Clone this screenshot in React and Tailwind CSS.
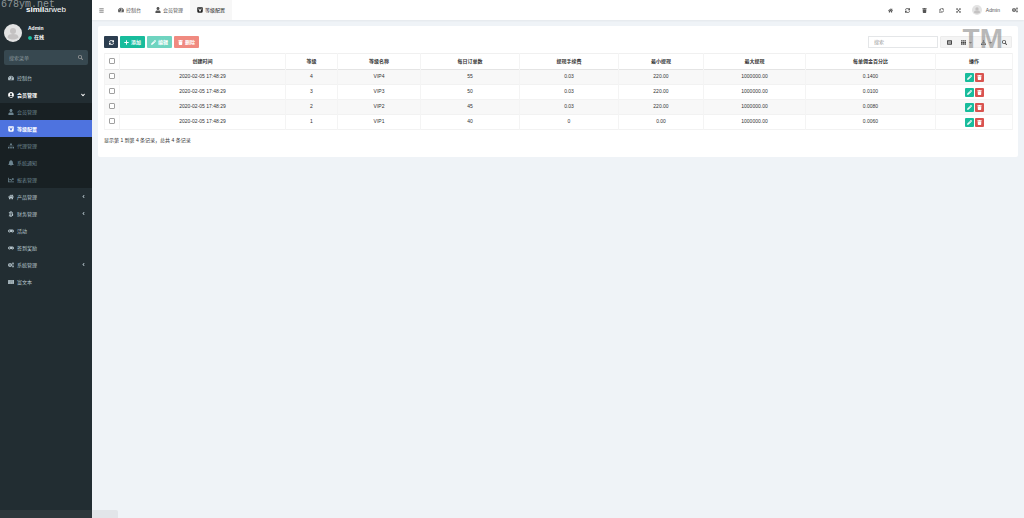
import {
  FaBars, FaTachometerAlt, FaUser, FaUserCircle, FaSitemap, FaBell, FaChartLine,
  FaHome, FaBtc, FaGamepad, FaCogs, FaNewspaper, FaAngleDown, FaAngleLeft, FaSearch,
  FaTrash, FaRegCopy, FaExpandArrowsAlt, FaPlus, FaPencilAlt, FaListAlt, FaTh,
  FaCaretDown, FaDownload, FaCircle, FaSync,
} from 'react-icons/fa'

function LevelIcon({ size }) {
  return (
    <svg viewBox="0 0 24 24" width={size} height={size} fill="currentColor" fillRule="evenodd" aria-hidden="true">
      <path d="M3 1h18a2 2 0 0 1 2 2v14a6 6 0 0 1-6 6H7a6 6 0 0 1-6-6V3a2 2 0 0 1 2-2zM5 6l5 12h4l5-12h-4l-3 7-3-7z" />
    </svg>
  )
}

const MENU = [
  { label: '控制台', icon: FaTachometerAlt },
  {
    label: '会员管理',
    icon: FaUserCircle,
    children: [
      { label: '会员管理', icon: FaUser },
      { label: '等级配置', icon: LevelIcon },
      { label: '代理管理', icon: FaSitemap },
      { label: '系统通知', icon: FaBell },
      { label: '报表管理', icon: FaChartLine },
    ],
  },
  { label: '产品管理', icon: FaHome, arrow: true },
  { label: '财务管理', icon: FaBtc, arrow: true },
  { label: '活动', icon: FaGamepad },
  { label: '签到奖励', icon: FaGamepad },
  { label: '系统管理', icon: FaCogs, arrow: true },
  { label: '富文本', icon: FaNewspaper },
]

const TABS = [
  { label: '控制台', icon: FaTachometerAlt },
  { label: '会员管理', icon: FaUser },
  { label: '等级配置', icon: LevelIcon, active: true },
]

const TOOLS = [
  { label: '主页', icon: FaHome },
  { label: '刷新', icon: FaSync },
  { label: '清除缓存', icon: FaTrash },
  { label: '语言', icon: FaRegCopy },
  { label: '全屏', icon: FaExpandArrowsAlt },
]

const COLUMNS = [
  { label: '创建时间', width: 'w-[166px]' },
  { label: '等级', width: 'w-[52px]' },
  { label: '等级名称', width: 'w-[83px]' },
  { label: '每日订单数', width: 'w-[99px]' },
  { label: '提现手续费', width: 'w-[99px]' },
  { label: '最小提现', width: 'w-[85px]' },
  { label: '最大提现', width: 'w-[102px]' },
  { label: '每单佣金百分比', width: 'w-[130px]' },
  { label: '操作', width: 'w-[77px]' },
]

const ROWS = [
  ['2020-02-05 17:48:29', '4', 'VIP4', '55', '0.03', '220.00', '1000000.00', '0.1400'],
  ['2020-02-05 17:48:29', '3', 'VIP3', '50', '0.03', '220.00', '1000000.00', '0.0100'],
  ['2020-02-05 17:48:29', '2', 'VIP2', '45', '0.03', '220.00', '1000000.00', '0.0080'],
  ['2020-02-05 17:48:29', '1', 'VIP1', '40', '0', '0.00', '1000000.00', '0.0060'],
]

const CELL = 'border-x border-[#f4f4f4] pb-[2px]'

function Avatar({ className }) {
  return (
    <svg viewBox="0 0 36 36" className={className} aria-hidden="true">
      <circle cx="18" cy="18" r="18" fill="#e3e3e3" />
      <circle cx="18" cy="14" r="6" fill="#c4c2c2" />
      <path d="M7 27c0-5 4-7 11-7s11 2 11 7c-3 3-7 4-11 4s-8-1-11-4z" fill="#c4c2c2" />
    </svg>
  )
}

function MenuLink({ item, className, open }) {
  const Icon = item.icon
  return (
    <a href="#" className={`flex h-[17px] items-center gap-[3px] pl-2 pr-[6px] ${className}`}>
      <span className="flex w-[6px] justify-center"><Icon size={6} /></span>
      <span className="flex-1">{item.label}</span>
      {open && <FaAngleDown size={6} />}
      {item.arrow && <FaAngleLeft size={5} />}
    </a>
  )
}

function Sidebar() {
  return (
    <aside className="w-[92px] shrink-0 bg-[#222d32] text-[#b8c7ce]">
      <a href="#" className="flex h-5 items-center justify-center text-[8px] text-white">
        <b>simil</b>arweb
      </a>
      <div className="flex h-[26px] items-center gap-[6px] px-1">
        <Avatar className="size-[18px]" />
        <div className="leading-[9px] text-white">
          <p className="font-bold">Admin</p>
          <p className="flex items-center gap-[2px] font-bold">
            <FaCircle size={4} className="text-[#18bc9c]" />在线
          </p>
        </div>
      </div>
      <form className="mx-1 mt-1 mb-1 flex h-[15px] items-center rounded-xs bg-[#374850] px-[5px]">
        <input
          aria-label="搜索菜单"
          placeholder="搜索菜单"
          className="min-w-0 flex-1 bg-transparent outline-none placeholder:text-[#8a979d]"
        />
        <button type="button" aria-label="搜索" className="text-[#999999]"><FaSearch size={5} /></button>
      </form>
      <nav>
        {MENU.map(item => (
          <div key={item.label}>
            <MenuLink item={item} open={!!item.children} className={item.children ? 'font-bold text-white' : ''} />
            {item.children && (
              <div className="bg-[#182023] text-[#6d8591]">
                {item.children.map(c => (
                  <MenuLink
                    key={c.label}
                    item={c}
                    className={c.label === '等级配置' ? 'bg-[#4e73df] font-bold text-white' : ''}
                  />
                ))}
              </div>
            )}
          </div>
        ))}
      </nav>
    </aside>
  )
}

function Header() {
  return (
    <header className="flex h-5 items-center justify-between bg-white pr-[6px] text-[#555555] shadow-xs">
      <div className="flex h-full items-center">
        <button aria-label="菜单" className="px-[7px]"><FaBars size={5} /></button>
        {TABS.map(({ label, icon: Icon, active }) => (
          <a
            key={label}
            href="#"
            className={`flex h-full items-center gap-[2px] px-[7px] ${active ? 'bg-[#f7f7f7] text-[#222222]' : ''}`}
          >
            <Icon size={6} />{label}
          </a>
        ))}
      </div>
      <div className="flex items-center">
        {TOOLS.map(({ label, icon: Icon }) => (
          <button key={label} aria-label={label} className="flex w-[17px] justify-center">
            <Icon size={5} />
          </button>
        ))}
        <a href="#" className="ml-[5px] flex items-center gap-1">
          <Avatar className="size-[10px]" />Admin
        </a>
        <button aria-label="设置" className="ml-3"><FaCogs size={6} /></button>
      </div>
    </header>
  )
}

function Toolbar() {
  return (
    <div className="flex items-center justify-between">
      <div className="flex gap-[2px] font-bold text-white">
        <button aria-label="刷新" className="flex h-3 w-[14px] items-center justify-center rounded-[1px] bg-[#2c3e50]">
          <FaSync size={5} />
        </button>
        <button className="flex h-3 w-[25px] items-center justify-center gap-[2px] rounded-[1px] bg-[#18bc9c]">
          <FaPlus size={5} />添加
        </button>
        <button className="flex h-3 w-[25px] items-center justify-center gap-[2px] rounded-[1px] bg-[#6fd4c0]">
          <FaPencilAlt size={5} />编辑
        </button>
        <button className="flex h-3 w-[25px] items-center justify-center gap-[2px] rounded-[1px] bg-[#f08a80]">
          <FaTrash size={5} />删除
        </button>
      </div>
      <div className="flex h-3 gap-[2px] text-[#444444]">
        <input
          aria-label="搜索"
          placeholder="搜索"
          className="w-[70px] border border-[#e4e6e8] px-[5px] outline-none placeholder:text-[#999999]"
        />
        <div className="flex rounded-[1px] border border-[#ececec] bg-[#f4f4f4]">
          <button aria-label="切换" className="flex w-4 items-center justify-center"><FaListAlt size={5} /></button>
          <button aria-label="列" className="flex w-5 items-center justify-center gap-[2px]">
            <FaTh size={5} /><FaCaretDown size={5} />
          </button>
          <button aria-label="导出" className="flex w-5 items-center justify-center gap-[2px]">
            <FaDownload size={5} /><FaCaretDown size={5} />
          </button>
          <button aria-label="普通搜索" className="flex w-[14px] items-center justify-center"><FaSearch size={5} /></button>
        </div>
      </div>
    </div>
  )
}

function Check({ label }) {
  return (
    <input
      type="checkbox"
      aria-label={label}
      className="mx-auto block size-[6px] appearance-none rounded-[1px] border border-[#a0a0a0] bg-white checked:bg-[#4e73df]"
    />
  )
}

function LevelTable() {
  return (
    <table className="mt-[5px] w-full table-fixed border-collapse text-center text-[#333333]">
      <thead>
        <tr className="h-4 border-t border-b border-t-[#f0f0f0] border-b-[#e4e4e4]">
          <th className={`w-[15px] ${CELL}`}><Check label="全选" /></th>
          {COLUMNS.map(c => (
            <th key={c.label} className={`${CELL} ${c.width}`}>{c.label}</th>
          ))}
        </tr>
      </thead>
      <tbody>
        {ROWS.map(row => (
          <tr key={row[2]} className="h-[15px] border-b border-[#f2f2f2] odd:bg-[#f8f8f8]">
            <td className={CELL}><Check label={row[2]} /></td>
            {row.map((v, i) => <td key={i} className={CELL}>{v}</td>)}
            <td className="border-x border-[#f4f4f4]">
              <div className="flex justify-center gap-px text-white">
                <button aria-label="编辑" className="flex size-[9px] items-center justify-center rounded-[1px] bg-[#18bc9c]">
                  <FaPencilAlt size={5} />
                </button>
                <button aria-label="删除" className="flex size-[9px] items-center justify-center rounded-[1px] bg-[#d9534f]">
                  <FaTrash size={5} />
                </button>
              </div>
            </td>
          </tr>
        ))}
      </tbody>
    </table>
  )
}

export default function App() {
  return (
    <div className="relative flex min-h-screen bg-[#eff3f7] font-['Liberation_Sans','Noto_Sans_CJK_SC',sans-serif] text-[5px] leading-[8px]">
      <Sidebar />
      <div className="min-w-0 flex-1">
        <Header />
        <main className="m-[6px] rounded-xs bg-white px-[6px] pt-[10px] pb-[13px]">
          <Toolbar />
          <LevelTable />
          <p className="mt-[6px] text-[#333333]">显示第 1 到第 4 条记录，总共 4 条记录</p>
        </main>
      </div>
      <span className="pointer-events-none absolute top-0 left-px font-['Liberation_Mono',monospace] text-[10px] leading-[10px] text-[#8e9698]">
        678ym.net
      </span>
      <span className="pointer-events-none absolute top-[25px] right-[21px] text-[28px] leading-[28px] font-bold text-[#999999]/70">
        TM
      </span>
      {/* link hint bar of the window */}
      <div className="absolute bottom-0 left-0 h-2 w-[118px] rounded-tr-xs bg-[#808080]/12" />
    </div>
  )
}
